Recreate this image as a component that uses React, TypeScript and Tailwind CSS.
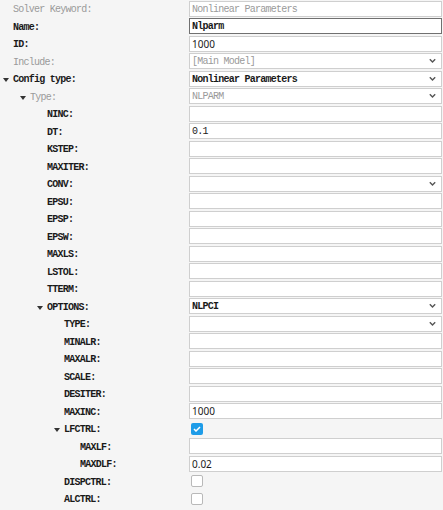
import React from "react";

type Field =
  | { kind: "text"; value?: string; disabled?: boolean; focused?: boolean; sans?: boolean; bold?: boolean }
  | { kind: "select"; value?: string; disabled?: boolean; bold?: boolean }
  | { kind: "check"; checked: boolean };

type Row = {
  label: string;
  indent: number;
  arrow?: boolean;
  disabled?: boolean;
  field: Field;
};

const rows: Row[] = [
  { label: "Solver Keyword:", indent: 0, disabled: true, field: { kind: "text", value: "Nonlinear Parameters", disabled: true } },
  { label: "Name:", indent: 0, field: { kind: "text", value: "Nlparm", focused: true, bold: true } },
  { label: "ID:", indent: 0, field: { kind: "text", value: "1000", sans: true } },
  { label: "Include:", indent: 0, disabled: true, field: { kind: "select", value: "[Main Model]", disabled: true } },
  { label: "Config type:", indent: 0, arrow: true, field: { kind: "select", value: "Nonlinear Parameters", bold: true } },
  { label: "Type:", indent: 1, arrow: true, disabled: true, field: { kind: "select", value: "NLPARM", disabled: true } },
  { label: "NINC:", indent: 2, field: { kind: "text" } },
  { label: "DT:", indent: 2, field: { kind: "text", value: "0.1" } },
  { label: "KSTEP:", indent: 2, field: { kind: "text" } },
  { label: "MAXITER:", indent: 2, field: { kind: "text" } },
  { label: "CONV:", indent: 2, field: { kind: "select" } },
  { label: "EPSU:", indent: 2, field: { kind: "text" } },
  { label: "EPSP:", indent: 2, field: { kind: "text" } },
  { label: "EPSW:", indent: 2, field: { kind: "text" } },
  { label: "MAXLS:", indent: 2, field: { kind: "text" } },
  { label: "LSTOL:", indent: 2, field: { kind: "text" } },
  { label: "TTERM:", indent: 2, field: { kind: "text" } },
  { label: "OPTIONS:", indent: 2, arrow: true, field: { kind: "select", value: "NLPCI", bold: true } },
  { label: "TYPE:", indent: 3, field: { kind: "select" } },
  { label: "MINALR:", indent: 3, field: { kind: "text" } },
  { label: "MAXALR:", indent: 3, field: { kind: "text" } },
  { label: "SCALE:", indent: 3, field: { kind: "text" } },
  { label: "DESITER:", indent: 3, field: { kind: "text" } },
  { label: "MAXINC:", indent: 3, field: { kind: "text", value: "1000", sans: true } },
  { label: "LFCTRL:", indent: 3, arrow: true, field: { kind: "check", checked: true } },
  { label: "MAXLF:", indent: 4, field: { kind: "text" } },
  { label: "MAXDLF:", indent: 4, field: { kind: "text", value: "0.02", sans: true } },
  { label: "DISPCTRL:", indent: 3, field: { kind: "check", checked: false } },
  { label: "ALCTRL:", indent: 3, field: { kind: "check", checked: false } },
];

const padClasses = ["pl-[13px]", "pl-[30px]", "pl-[47px]", "pl-[64px]", "pl-[80px]"];

const mono = { fontFamily: '"Liberation Mono", "Noto Sans CJK SC", monospace' };

function Arrow() {
  return (
    <svg width="6" height="4" viewBox="0 0 6 4" className="absolute left-[-10px] top-[3px]">
      <path d="M0 0 L6 0 L3 4 Z" fill="#333" />
    </svg>
  );
}

function Chevron() {
  return (
    <svg width="7" height="5" viewBox="0 0 7 5" className="absolute right-[5px] top-1/2 -translate-y-1/2">
      <path d="M0.8 0.8 L3.5 3.5 L6.2 0.8" stroke="#555" strokeWidth="1.4" fill="none" />
    </svg>
  );
}

function FieldView({ f }: { f: Field }) {
  if (f.kind === "check") {
    return f.checked ? (
      <div className="ml-[2px] w-[12px] h-[12px] rounded-[2px] bg-[#1e9ce8] flex items-center justify-center">
        <svg width="8" height="6" viewBox="0 0 8 6">
          <path d="M1 3 L3 5 L7 1" stroke="#fff" strokeWidth="1.5" fill="none" />
        </svg>
      </div>
    ) : (
      <div className="ml-[2px] w-[12px] h-[12px] rounded-[2px] bg-white border border-[#b9b9b9]" />
    );
  }
  const border = f.kind === "text" && f.focused ? "border-[#707070]" : "border-[#cfcfcf]";
  const color = f.disabled ? "text-[#9a9a9a]" : "text-[#1a1a1a]";
  const sans = f.kind === "text" && f.sans;
  return (
    <div className={`relative w-full h-[16px] bg-white border ${border} flex items-center pl-[2px] leading-none`}>
      {f.value ? (
        <span
          className={`${color} leading-none whitespace-pre ${sans ? "text-[10px]" : "text-[10px] tracking-[-0.75px] pt-[2px]"} ${f.bold ? "font-bold" : ""}`}
          style={sans ? { fontFamily: '"Noto Sans", "Liberation Sans", sans-serif' } : mono}
        >
          {f.value}
        </span>
      ) : null}
      {f.kind === "select" ? <Chevron /> : null}
    </div>
  );
}

export default function App() {
  return (
    <div className="w-[443px] h-[510px] bg-[#f5f5f5] overflow-hidden">
      <div className="grid auto-rows-[17.5px]">
        {rows.map((r, i) => (
          <div key={i} className="flex items-center">
            <div className={`w-[189px] shrink-0 h-full flex items-center leading-none pt-[3px] ${padClasses[r.indent]}`}>
              <span
                className={`relative text-[10px] tracking-[-0.75px] leading-none ${r.disabled ? "text-[#9a9a9a]" : "text-[#1a1a1a] font-bold"}`}
                style={mono}
              >
                {r.arrow ? <Arrow /> : null}
                {r.label}
              </span>
            </div>
            <div className="flex-1 mr-[1px] flex items-center">
              <FieldView f={r.field} />
            </div>
          </div>
        ))}
      </div>
    </div>
  );
}
